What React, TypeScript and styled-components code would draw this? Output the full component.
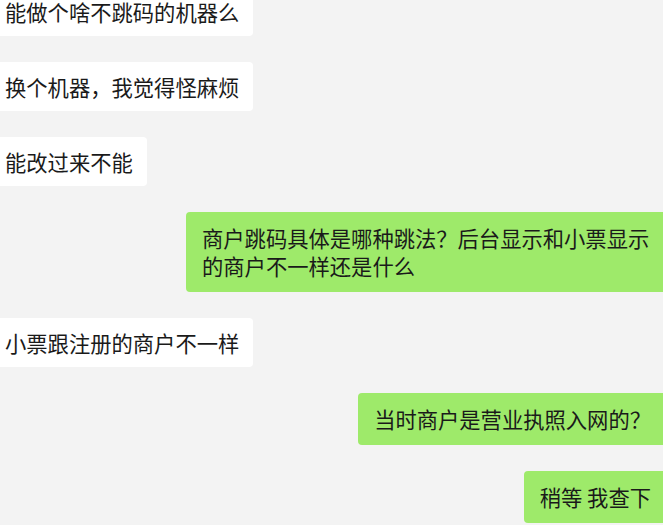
import styled, { createGlobalStyle } from 'styled-components';

interface Message {
  text: string;
  mine: boolean;
}

interface BubbleProps {
  $mine: boolean;
}

const messages: Message[] = [
  { text: '能做个啥不跳码的机器么', mine: false },
  { text: '换个机器，我觉得怪麻烦', mine: false },
  { text: '能改过来不能', mine: false },
  { text: '商户跳码具体是哪种跳法？后台显示和小票显示的商户不一样还是什么', mine: true },
  { text: '小票跟注册的商户不一样', mine: false },
  { text: '当时商户是营业执照入网的？', mine: true },
  { text: '稍等 我查下', mine: true },
];

const GlobalStyle = createGlobalStyle`
  html, body {
    margin: 0;
    padding: 0;
    background: #f3f3f3;
    overflow: hidden;
  }
`;

const Page = styled.div`
  width: 663px;
  height: 525px;
  background: #f3f3f3;
  overflow: hidden;
  font-family: 'Noto Sans CJK SC', 'Noto Sans', sans-serif;
`;

const Thread = styled.div`
  display: flex;
  flex-direction: column;
  gap: 26px;
  margin-top: -13px;
`;

const Row = styled.div<BubbleProps>`
  display: flex;
  justify-content: ${({ $mine }) => ($mine ? 'flex-end' : 'flex-start')};
`;

const Bubble = styled.div<BubbleProps>`
  max-width: 481px;
  box-sizing: border-box;
  padding: ${({ $mine }) => ($mine ? '12px 16px' : '10.5px 14px')};
  margin-left: ${({ $mine }) => ($mine ? '0' : '-9px')};
  margin-right: ${({ $mine }) => ($mine ? '-4px' : '0')};
  background: ${({ $mine }) => ($mine ? '#9eea6a' : '#ffffff')};
  border-radius: 4px;
  color: #1a1a1a;
  font-size: 21.3px;
  line-height: 28px;
  word-break: break-all;
`;

function App() {
  return (
    <Page>
      <GlobalStyle />
      <Thread>
        {messages.map((m, i) => (
          <Row key={i} $mine={m.mine}>
            <Bubble $mine={m.mine}>{m.text}</Bubble>
          </Row>
        ))}
      </Thread>
    </Page>
  );
}

export default App;
